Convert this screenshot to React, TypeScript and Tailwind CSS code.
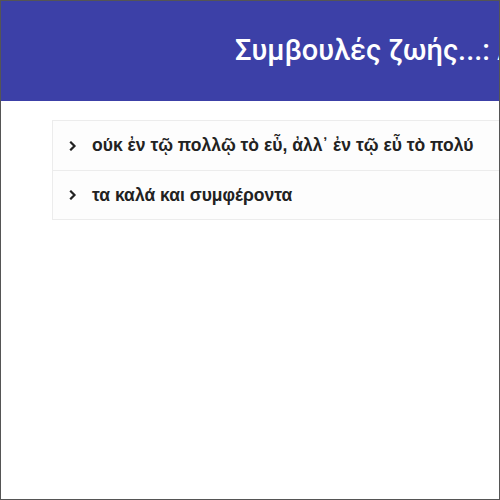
import React from "react";

const items = [
  "ούκ ἐν τῷ πολλῷ τὸ εὖ, ἀλλ᾽ ἐν τῷ εὖ τὸ πολύ",
  "τα καλά και συμφέροντα",
];

function Chevron() {
  return (
    <svg width="8" height="10" viewBox="0 0 8 10" className="shrink-0">
      <path d="M2 1.5 L5.5 5 L2 8.5" fill="none" stroke="#222" strokeWidth="2.2" strokeLinecap="square" />
    </svg>
  );
}

export default function App() {
  return (
    <div
      className="w-[500px] h-[500px] overflow-hidden bg-white border border-[#555] flex flex-col"
      style={{ fontFamily: '"Liberation Sans", Arial, sans-serif' }}
    >
      <div className="h-[100px] shrink-0 bg-[#3c40a7] flex items-center pl-[234px] overflow-hidden whitespace-nowrap">
        <span
          className="text-white text-[29px] font-medium leading-none -mt-[2px]"
          style={{ fontFamily: 'Roboto, "Liberation Sans", sans-serif' }}
        >
          Συμβουλές ζωής...: Αρχαίοι
        </span>
      </div>
      <div className="pt-[19px] pl-[51px]">
        <div className="w-[520px] border border-[#ececec] bg-[#fdfdfd] flex flex-col">
          {items.map((t, i) => (
            <div
              key={i}
              className={`h-[49px] flex items-center pl-[16px] gap-[15px] ${i > 0 ? "border-t border-[#ececec]" : ""}`}
            >
              <Chevron />
              <span className="text-[17.5px] font-bold text-[#222] whitespace-nowrap">{t}</span>
            </div>
          ))}
        </div>
      </div>
    </div>
  );
}
